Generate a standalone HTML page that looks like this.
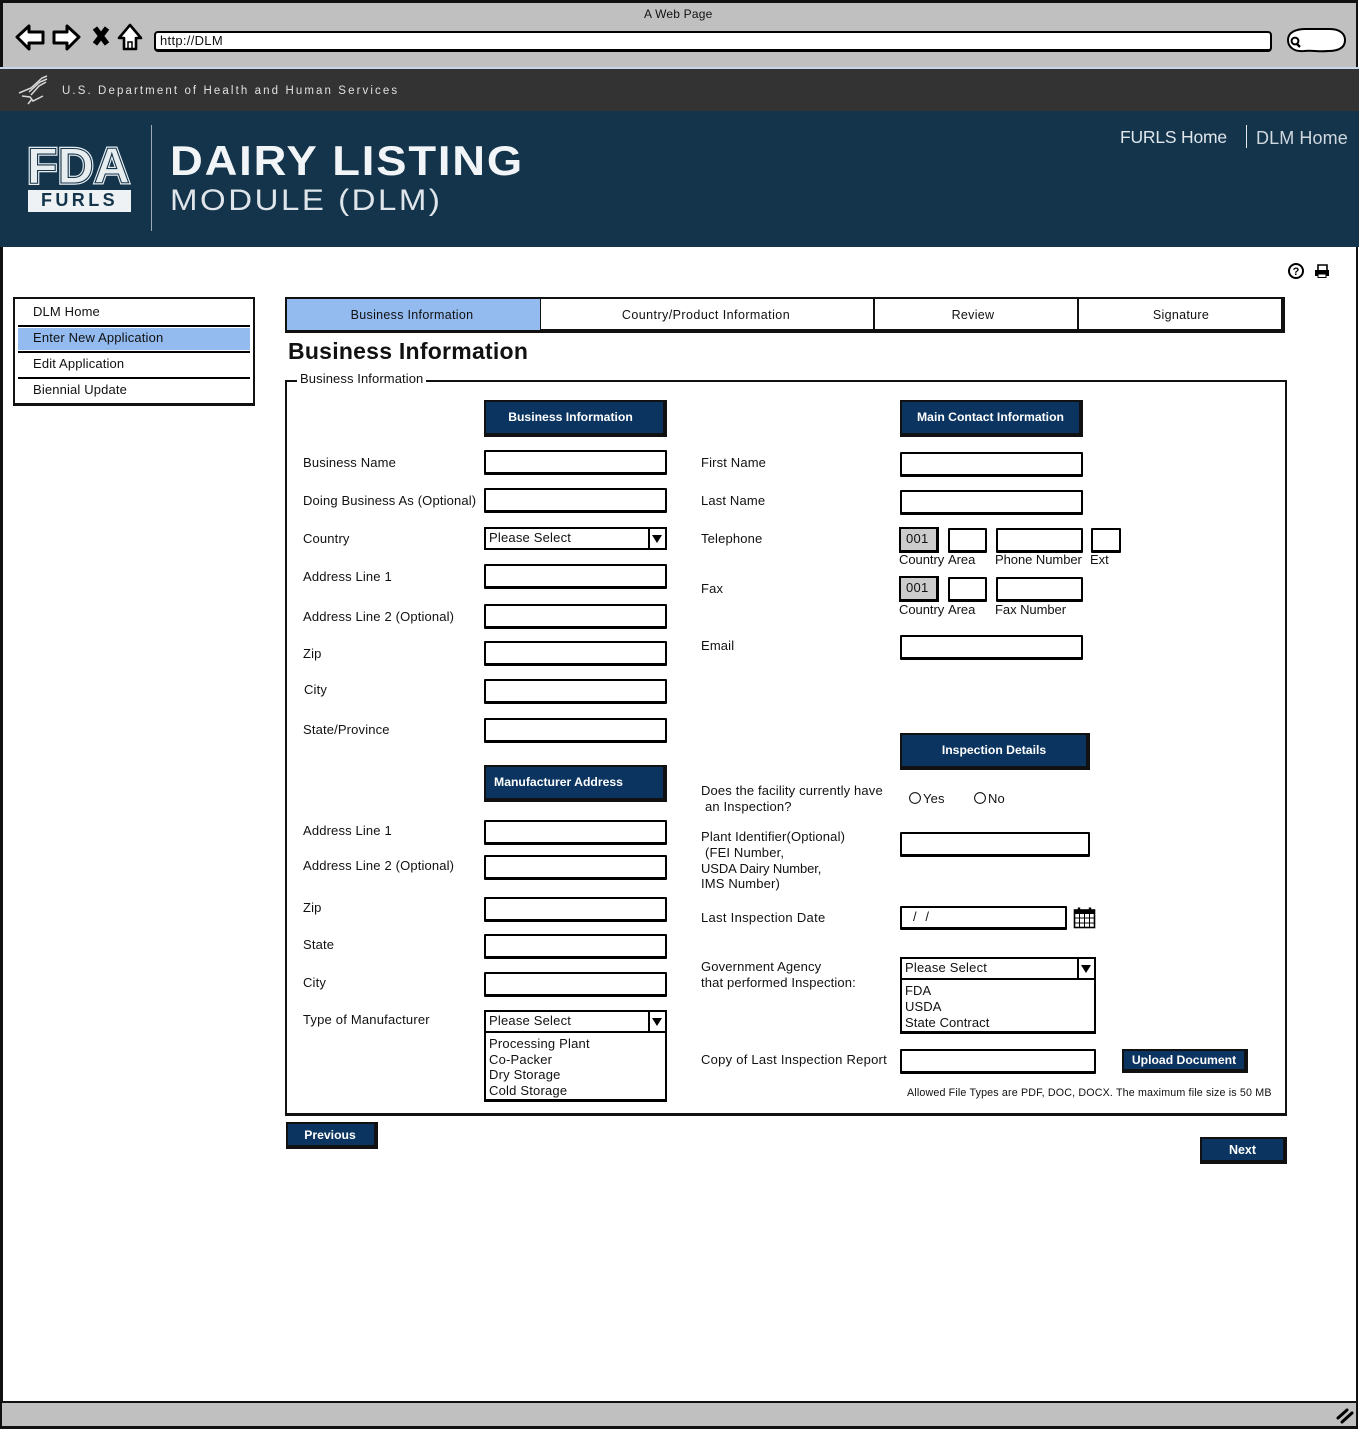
<!DOCTYPE html>
<html><head><meta charset="utf-8"><title>A Web Page</title>
<style>
html,body{margin:0;padding:0;background:#fff}
#p{position:relative;width:1359px;height:1429px;overflow:hidden;background:#fff;font-family:"Liberation Sans",sans-serif;color:#111}
#p div,#p svg{position:absolute;box-sizing:border-box}
.t{font-size:13px;line-height:16px;white-space:nowrap;letter-spacing:.15px}
.i{background:#fff;border:2px solid #000;border-bottom-width:3px;border-radius:1px}
.g{background:#ccc;border:2px solid #000;border-right-width:3px;border-bottom-width:3px;font-size:13px;line-height:19px;padding-left:5px;letter-spacing:.3px}
.h{background:#0b3560;border:2px solid #111;border-right-width:4px;border-bottom-width:4px;color:#fff;font-weight:bold;font-size:12.2px;text-align:center;white-space:nowrap}
.s{background:#fff;border:2px solid #000;font-size:13px;line-height:18px;padding-left:3px;letter-spacing:.2px;white-space:nowrap}
.a{background:#fff;border-left:2px solid #000}
.l{background:#fff;border:2px solid #000;border-bottom-width:3px;font-size:13px;line-height:16px;padding:3px 0 0 3px;letter-spacing:.2px;white-space:nowrap}
.m{font-size:13px;line-height:16px;left:33px;white-space:nowrap;letter-spacing:.15px}
.r{background:#000;height:2px}
.tab{text-align:center;font-size:12.5px;line-height:32px;top:299px;height:31px;white-space:nowrap;letter-spacing:.3px}
.n{letter-spacing:-.05px}
</style></head><body><div id="p">

<!-- browser chrome -->
<div style="left:0;top:0;width:1358px;height:68px;background:#c0c0c0;border:3px solid #111;border-bottom:0;border-right-width:2px"></div>
<div style="left:0;top:67px;width:1359px;height:2px;background:#c8d8ea"></div>
<div class="t" style="left:644px;top:6px;font-size:12px;letter-spacing:.2px">A Web Page</div>
<svg style="left:14px;top:20px" width="130" height="34" viewBox="0 0 130 34">
 <path d="M3 17 L15 6 L15 12 L29 12 L29 23 L15 23 L15 29 Z" fill="#fff" stroke="#000" stroke-width="3" stroke-linejoin="round"/>
 <path d="M65 17 L53 6 L53 12 L40 12 L40 23 L53 23 L53 29 Z" fill="#fff" stroke="#000" stroke-width="3" stroke-linejoin="round"/>
 <path d="M81 8 L93 24 M93 8 L81 24" stroke="#000" stroke-width="5.5" fill="none"/>
 <path d="M116 5 L105 18 L110 18 L110 29 L122 29 L122 18 L127 18 Z" fill="#fff" stroke="#000" stroke-width="2.6" stroke-linejoin="round"/>
 <path d="M114 29 V22 H118 V29" fill="none" stroke="#000" stroke-width="1.5"/>
</svg>
<div style="left:154px;top:31px;width:1118px;height:21px;background:#fff;border:2px solid #000;border-bottom-width:3px;border-radius:4px"></div>
<div class="t" style="left:160px;top:33px;letter-spacing:.3px">http://DLM</div>
<svg style="left:1284px;top:26px" width="64" height="28" viewBox="0 0 64 28">
 <path d="M4 14 C4 6 12 3 22 3 H46 C56 3 61 8 61 14 C61 22 54 25 44 25 C34 26 28 24 20 25 C10 26 4 21 4 14 Z" fill="#fff" stroke="#000" stroke-width="2"/>
 <circle cx="11" cy="15" r="3.4" fill="none" stroke="#000" stroke-width="2"/><path d="M13 18 L16 21" stroke="#000" stroke-width="2.4"/>
</svg>

<!-- site header -->
<div style="left:0;top:69px;width:1359px;height:42px;background:#333"></div>
<svg style="left:16px;top:74px" width="36" height="32" viewBox="0 0 36 32" fill="none" stroke="#d8d8d8" stroke-width="1.5">
 <path d="M3 19 L15 14 L26 4 L31 2"/><path d="M13 18 L24 8 L31 5"/><path d="M15 21 L23 12 L30 8"/><path d="M6 22 L14 23 L17 27 L27 22"/><path d="M12 30 L16 25"/>
</svg>
<div class="t" style="left:62px;top:83px;color:#e0e0e0;font-size:11.5px;letter-spacing:2.1px">U.S. Department of Health and Human Services</div>
<div style="left:0;top:111px;width:1359px;height:136px;background:#13344b"></div>
<svg style="left:26px;top:144px" width="106" height="46" viewBox="0 0 106 46">
 <text x="1" y="39" font-family="Liberation Sans" font-weight="bold" font-size="50" textLength="103" lengthAdjust="spacingAndGlyphs" fill="#13344b" stroke="#e8edf0" stroke-width="3.4">FDA</text>
 <text x="1" y="39" font-family="Liberation Sans" font-weight="bold" font-size="50" textLength="103" lengthAdjust="spacingAndGlyphs" fill="#e8edf0" stroke="#13344b" stroke-width="1.1">FDA</text>
</svg>
<div style="left:28px;top:190px;width:103px;height:22px;background:#eef2f4;color:#13344b;font-weight:bold;font-size:18px;line-height:21px;text-align:center;letter-spacing:3.4px">FURLS</div>
<div style="left:151px;top:125px;width:1px;height:106px;background:#9aa9b4"></div>
<div class="t" style="left:170px;top:136px;line-height:50px;font-size:42px;font-weight:bold;color:#f2f5f7;letter-spacing:1.7px;transform:scaleX(1.08);transform-origin:left center">DAIRY LISTING</div>
<div class="t" style="left:170px;top:182px;line-height:38px;font-size:30px;color:#dfe5ea;letter-spacing:2.3px;transform:scaleX(1.1);transform-origin:left center">MODULE (DLM)</div>
<div class="t" style="left:1120px;top:127px;line-height:20px;font-size:17.5px;color:#dfe6ec;letter-spacing:-.2px">FURLS Home</div>
<div style="left:1246px;top:125px;width:1px;height:23px;background:#e8e8e8"></div>
<div class="t" style="left:1256px;top:128px;line-height:20px;font-size:18px;color:#d0d8df;letter-spacing:.1px">DLM Home</div>

<!-- page side borders -->
<div style="left:0;top:247px;width:3px;height:1180px;background:#111"></div>
<div style="left:1356px;top:247px;width:2px;height:1180px;background:#111"></div>

<!-- icons -->
<svg style="left:1286px;top:261px" width="46" height="20" viewBox="0 0 46 20">
 <circle cx="10" cy="10" r="7" fill="#fff" stroke="#000" stroke-width="2"/>
 <text x="10" y="14" text-anchor="middle" font-family="Liberation Sans" font-weight="bold" font-size="11" fill="#000">?</text>
 <path d="M32 9 V4 H41 V9" fill="#fff" stroke="#000" stroke-width="1.6"/>
 <path d="M29 9 H43 V15 H29 Z" fill="#000"/><rect x="32" y="13" width="8" height="3.5" fill="#fff" stroke="#000" stroke-width="1"/>
</svg>

<!-- side nav -->
<div style="left:13px;top:297px;width:242px;height:109px;background:#fff;border:2px solid #111;border-bottom-width:3px"></div>
<div style="left:18px;top:328px;width:232px;height:22px;background:#94bbf0"></div>
<div class="r" style="left:18px;top:325px;width:232px"></div>
<div class="r" style="left:18px;top:351px;width:232px"></div>
<div class="r" style="left:18px;top:377px;width:232px"></div>
<div class="m" style="top:304px">DLM Home</div>
<div class="m" style="top:330px">Enter New Application</div>
<div class="m" style="top:356px">Edit Application</div>
<div class="m" style="top:382px">Biennial Update</div>

<!-- tabs -->
<div style="left:285px;top:297px;width:1000px;height:36px;background:#fff;border:2px solid #111;border-bottom-width:4px;border-right-width:4px"></div>
<div style="left:287px;top:299px;width:253px;height:31px;background:#94bbf0"></div>
<div style="left:540px;top:299px;width:1px;height:31px;background:#111"></div>
<div style="left:873px;top:299px;width:2px;height:31px;background:#111"></div>
<div style="left:1077px;top:299px;width:2px;height:31px;background:#111"></div>
<div class="tab" style="left:287px;width:250px">Business Information</div>
<div class="tab" style="left:541px;width:330px;letter-spacing:.44px">Country/Product Information</div>
<div class="tab" style="left:875px;width:196px">Review</div>
<div class="tab" style="left:1079px;width:204px">Signature</div>

<div class="t" style="left:288px;top:337px;line-height:28px;font-size:23px;font-weight:bold;letter-spacing:.25px">Business Information</div>

<!-- fieldset -->
<div style="left:285px;top:380px;width:1002px;height:736px;border:2px solid #111;border-bottom-width:3px"></div>
<div class="t" style="left:297px;top:371px;background:#fff;padding:0 3px;letter-spacing:.1px">Business Information</div>

<!-- left column -->
<div class="h" style="left:484px;top:400px;width:183px;height:37px;line-height:31px;padding-right:8px">Business Information</div>
<div class="t" style="left:303px;top:455px">Business Name</div>
<div class="t" style="left:303px;top:493px">Doing Business As (Optional)</div>
<div class="t" style="left:303px;top:531px">Country</div>
<div class="t" style="left:303px;top:569px">Address Line 1</div>
<div class="t" style="left:303px;top:609px">Address Line 2 (Optional)</div>
<div class="t" style="left:303px;top:646px">Zip</div>
<div class="t" style="left:304px;top:682px">City</div>
<div class="t" style="left:303px;top:722px">State/Province</div>
<div class="i" style="left:484px;top:450px;width:183px;height:25px"></div>
<div class="i" style="left:484px;top:488px;width:183px;height:25px"></div>
<div class="s" style="left:484px;top:527px;width:183px;height:23px">Please Select</div>
<div class="a" style="left:648px;top:529px;width:17px;height:19px"></div>
<svg style="left:652px;top:534px" width="11" height="10" viewBox="0 0 11 10"><path d="M0 1 H10 L5 9 Z" fill="#000"/></svg>
<div class="i" style="left:484px;top:564px;width:183px;height:25px"></div>
<div class="i" style="left:484px;top:604px;width:183px;height:25px"></div>
<div class="i" style="left:484px;top:641px;width:183px;height:25px"></div>
<div class="i" style="left:484px;top:679px;width:183px;height:25px"></div>
<div class="i" style="left:484px;top:718px;width:183px;height:25px"></div>

<div class="h" style="left:484px;top:765px;width:183px;height:37px;line-height:31px;padding-right:32px">Manufacturer Address</div>
<div class="t" style="left:303px;top:823px">Address Line 1</div>
<div class="t" style="left:303px;top:858px">Address Line 2 (Optional)</div>
<div class="t" style="left:303px;top:900px">Zip</div>
<div class="t" style="left:303px;top:937px">State</div>
<div class="t" style="left:303px;top:975px">City</div>
<div class="t" style="left:303px;top:1012px;letter-spacing:.2px">Type of Manufacturer</div>
<div class="i" style="left:484px;top:820px;width:183px;height:25px"></div>
<div class="i" style="left:484px;top:855px;width:183px;height:25px"></div>
<div class="i" style="left:484px;top:897px;width:183px;height:25px"></div>
<div class="i" style="left:484px;top:934px;width:183px;height:25px"></div>
<div class="i" style="left:484px;top:972px;width:183px;height:25px"></div>
<div class="s" style="left:484px;top:1010px;width:183px;height:23px">Please Select</div>
<div class="a" style="left:648px;top:1012px;width:17px;height:19px"></div>
<svg style="left:652px;top:1017px" width="11" height="10" viewBox="0 0 11 10"><path d="M0 1 H10 L5 9 Z" fill="#000"/></svg>
<div class="l" style="left:484px;top:1031px;width:183px;height:71px;line-height:15.7px">Processing Plant<br>Co-Packer<br>Dry Storage<br>Cold Storage</div>

<!-- right column -->
<div class="h" style="left:900px;top:400px;width:183px;height:37px;line-height:31px">Main Contact Information</div>
<div class="t" style="left:701px;top:455px">First Name</div>
<div class="t" style="left:701px;top:493px">Last Name</div>
<div class="t" style="left:701px;top:531px">Telephone</div>
<div class="t" style="left:701px;top:581px">Fax</div>
<div class="t" style="left:701px;top:638px">Email</div>
<div class="i" style="left:900px;top:452px;width:183px;height:25px"></div>
<div class="i" style="left:900px;top:490px;width:183px;height:25px"></div>
<div class="g" style="left:899px;top:527px;width:40px;height:26px">001</div>
<div class="i" style="left:948px;top:528px;width:39px;height:25px"></div>
<div class="i" style="left:996px;top:528px;width:87px;height:25px"></div>
<div class="i" style="left:1091px;top:528px;width:30px;height:25px"></div>
<div class="t n" style="left:899px;top:552px">Country</div>
<div class="t n" style="left:948px;top:552px">Area</div>
<div class="t n" style="left:995px;top:552px">Phone Number</div>
<div class="t n" style="left:1090px;top:552px">Ext</div>
<div class="g" style="left:899px;top:576px;width:40px;height:26px">001</div>
<div class="i" style="left:948px;top:577px;width:39px;height:25px"></div>
<div class="i" style="left:996px;top:577px;width:87px;height:25px"></div>
<div class="t n" style="left:899px;top:602px">Country</div>
<div class="t n" style="left:948px;top:602px">Area</div>
<div class="t n" style="left:995px;top:602px">Fax Number</div>
<div class="i" style="left:900px;top:635px;width:183px;height:25px"></div>

<div class="h" style="left:900px;top:733px;width:190px;height:37px;line-height:31px">Inspection Details</div>
<div class="t" style="left:701px;top:783px">Does the facility currently have</div>
<div class="t" style="left:705px;top:799px">an Inspection?</div>
<svg style="left:908px;top:791px" width="80" height="14" viewBox="0 0 80 14">
 <circle cx="7" cy="7" r="5.4" fill="#fff" stroke="#000" stroke-width="1"/>
 <circle cx="72" cy="7" r="5.4" fill="#fff" stroke="#000" stroke-width="1"/>
</svg>
<div class="t" style="left:923px;top:791px">Yes</div>
<div class="t" style="left:988px;top:791px">No</div>
<div class="t" style="left:701px;top:829px">Plant Identifier(Optional)</div>
<div class="t" style="left:705px;top:845px">(FEI Number,</div>
<div class="t" style="left:701px;top:861px;letter-spacing:-.1px">USDA Dairy Number,</div>
<div class="t" style="left:701px;top:876px">IMS Number)</div>
<div class="i" style="left:900px;top:832px;width:190px;height:25px"></div>
<div class="t" style="left:701px;top:910px;letter-spacing:.3px">Last Inspection Date</div>
<div class="i" style="left:900px;top:906px;width:167px;height:24px"></div>
<div class="t" style="left:913px;top:909px;letter-spacing:.5px">/&nbsp; /</div>
<svg style="left:1073px;top:905px" width="23" height="24" viewBox="0 0 23 24">
 <rect x="1.5" y="5" width="20" height="17.5" fill="#fff" stroke="#000" stroke-width="1.6"/>
 <rect x="1.5" y="5" width="20" height="4" fill="#000"/>
 <path d="M1.5 13H21.5M1.5 18H21.5M6.5 9V22M11.5 9V22M16.5 9V22" stroke="#000" stroke-width="1"/>
 <path d="M6 7V2.5M17 7V2.5" stroke="#000" stroke-width="2.4"/>
</svg>
<div class="t" style="left:701px;top:959px">Government Agency</div>
<div class="t" style="left:701px;top:975px">that performed Inspection:</div>
<div class="s" style="left:900px;top:957px;width:196px;height:23px">Please Select</div>
<div class="a" style="left:1077px;top:959px;width:17px;height:19px"></div>
<svg style="left:1081px;top:964px" width="11" height="10" viewBox="0 0 11 10"><path d="M0 1 H10 L5 9 Z" fill="#000"/></svg>
<div class="l" style="left:900px;top:978px;width:196px;height:56px;letter-spacing:.1px">FDA<br>USDA<br>State Contract</div>
<div class="t" style="left:701px;top:1052px;letter-spacing:.25px">Copy of Last Inspection Report</div>
<div class="i" style="left:900px;top:1049px;width:196px;height:25px"></div>
<div class="h" style="left:1122px;top:1049px;width:126px;height:24px;line-height:19px;font-size:12.2px">Upload Document</div>
<div class="t" style="left:907px;top:1085px;font-size:10.7px;letter-spacing:.16px">Allowed File Types are PDF, DOC, DOCX. The maximum file size is 50 MB</div>

<!-- nav buttons -->
<div class="h" style="left:286px;top:1122px;width:92px;height:27px;line-height:22px;font-size:12.2px;padding-right:2px">Previous</div>
<div class="h" style="left:1200px;top:1137px;width:87px;height:27px;line-height:22px;font-size:12.5px">Next</div>

<!-- status bar -->
<div style="left:0;top:1401px;width:1358px;height:28px;background:#c0c0c0;border:solid #111;border-width:2px 2px 3px 2px"></div>
<svg style="left:1335px;top:1407px" width="20" height="18" viewBox="0 0 20 18"><path d="M3 11 L12 3 M7 15 L17 6" stroke="#000" stroke-width="3" stroke-linecap="round"/></svg>
</div></body></html>
